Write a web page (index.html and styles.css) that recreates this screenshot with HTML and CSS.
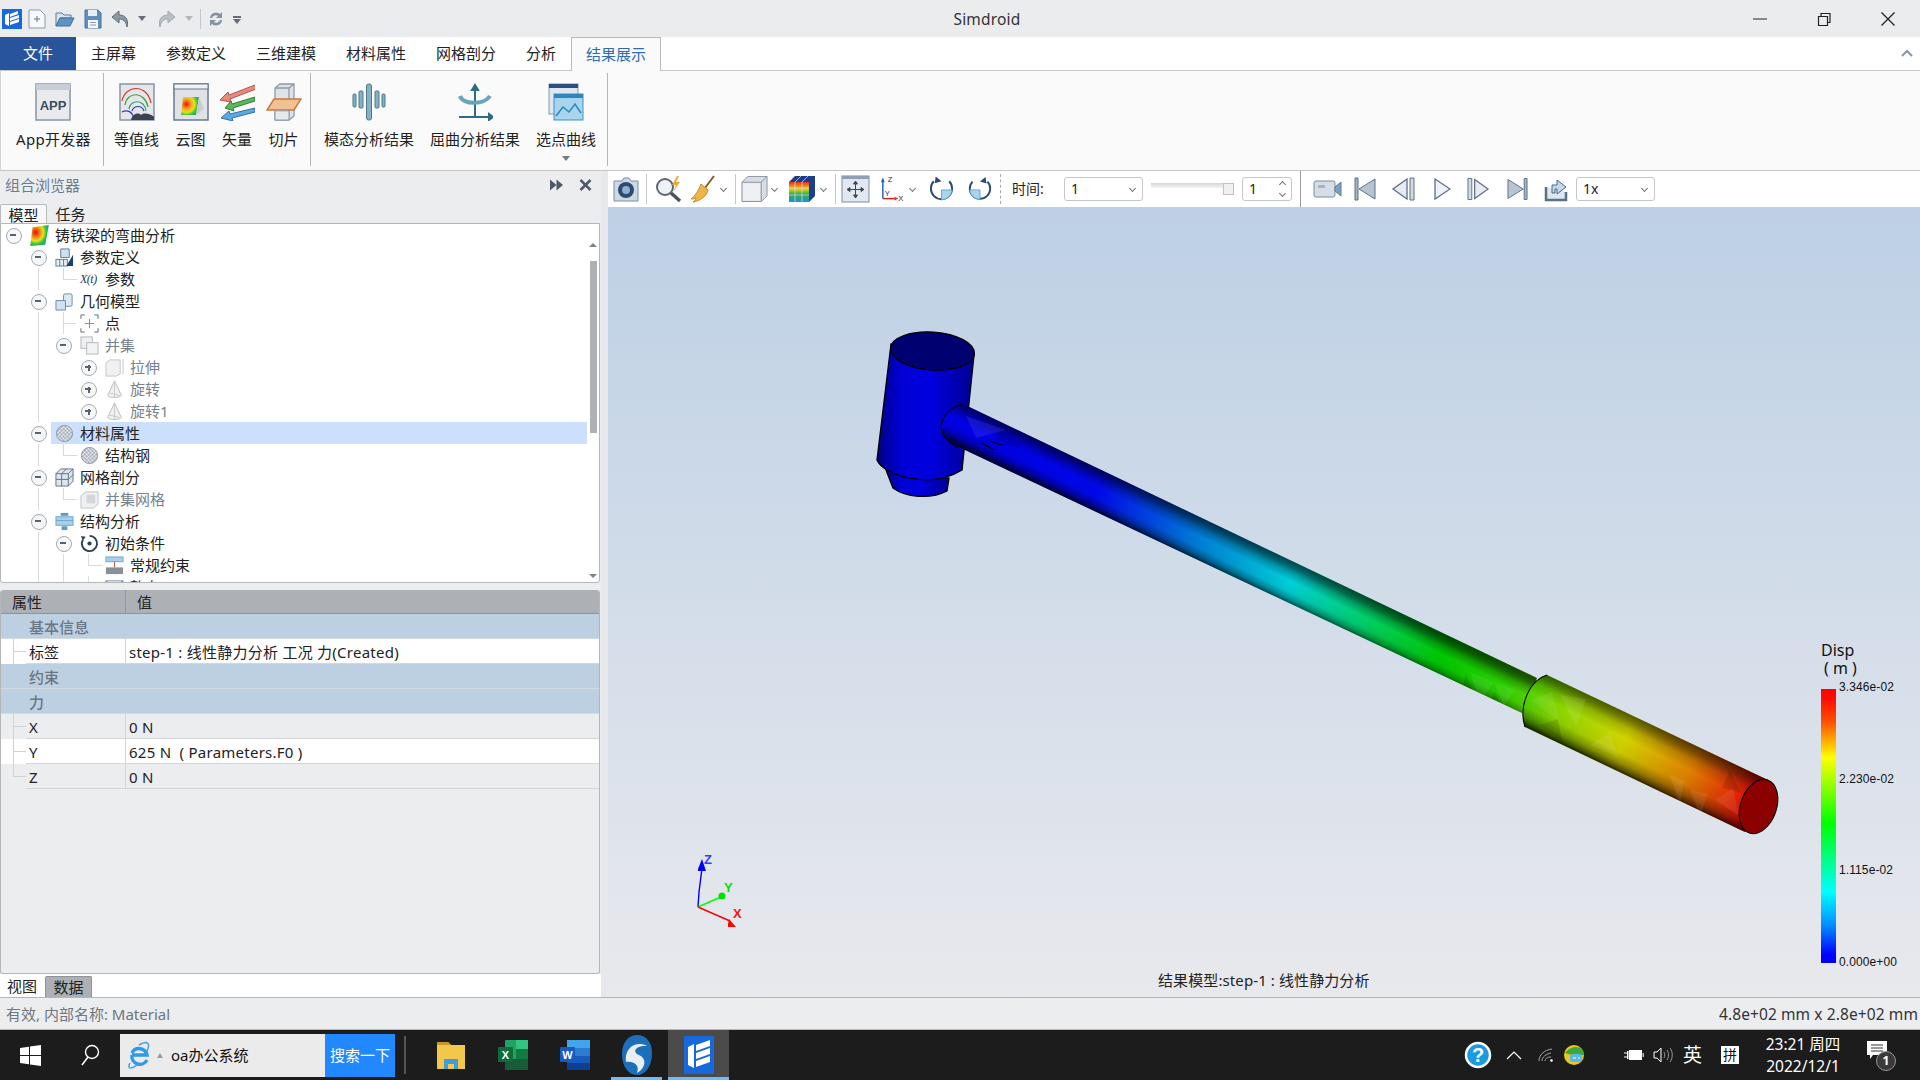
FILE: index.html
```html
<!DOCTYPE html>
<html lang="zh-CN">
<head>
<meta charset="utf-8">
<title>Simdroid</title>
<link rel="stylesheet" href="styles.css">
</head>
<body>
<svg class="defs" aria-hidden="true">
  <defs>
    <symbol id="logo" viewBox="0 0 20 20"><rect width="20" height="20" fill="#1668dc"/><path fill="#fff" d="M3 6l4-2v13l-4-2zM8 5l8-3v3l-8 3zM8 9l9-3v3l-9 3zM8 13l9-3v3l-9 3z"/></symbol>
    <pattern id="chk" width="4" height="4" patternUnits="userSpaceOnUse"><rect width="4" height="4" fill="#f2f3f6"/><circle cx="1" cy="1" r="1.300" fill="#a4acb8"/><circle cx="3" cy="3" r="1.300" fill="#a4acb8"/></pattern>
    <symbol id="ball" viewBox="0 0 20 20"><circle cx="10" cy="10" r="8.500" fill="url(#chk)" stroke="#8b98a8"/></symbol>
    <symbol id="cone" viewBox="0 0 20 22"><path d="M10 1L2 18c2 3 14 3 16 0z" fill="#f0f0f0" stroke="#b5b8bc"/><path d="M10 1v19M4 15l12 3" stroke="#c4c6c9" fill="none"/></symbol>
  </defs>
</svg>

<div class="app">
  <header class="titlebar">
    <div class="qat">
      <svg class="q q20 first" viewBox="0 0 20 20"><use href="#logo"/></svg>
      <svg class="q q18" viewBox="0 0 18 20"><path d="M1 1h11l5 5v13H1z" fill="#f7f8fa" stroke="#8c9bb0"/><path d="M6 10h6M9 7v6" stroke="#66758a"/></svg>
      <svg class="q q20" viewBox="0 0 20 18"><path d="M1 3h6l2 2h7v3H5L1 16z" fill="#d8e4ef" stroke="#5d7c9a"/><path d="M5 8h14l-4 8H1z" fill="#5f93c4" stroke="#3f6f9f"/></svg>
      <svg class="q q18" viewBox="0 0 18 20"><path d="M1 1h13l3 3v15H1z" fill="#5e8fc0" stroke="#48709a"/><rect x="4" y="1" width="9" height="6" fill="#e8eef4"/><rect x="4" y="11" width="10" height="8" fill="#f4f6f8"/><path d="M6 13.500h6M6 16h6" stroke="#8a9bb0"/></svg>
      <svg class="q q18" viewBox="0 0 18 18"><path d="M8 1L1 7l7 6V9c4 0 7 2 8 8 2-8-2-12-8-12z" fill="#8d97a5" stroke="#5f6b7a"/></svg>
      <i class="caret gap"></i>
      <svg class="q q18 dim" viewBox="0 0 18 18"><path d="M10 1l7 6-7 6V9c-4 0-7 2-8 8C0 9 4 5 10 5z" fill="#b9bfc7" stroke="#a3a9b1"/></svg>
      <i class="caret light"></i>
      <i class="qsep"></i>
      <svg class="q q16" viewBox="0 0 16 18"><path d="M2 8a6 6 0 0 1 10-4l2-2v6H8l2-2a4 4 0 0 0-6 2zM14 10a6 6 0 0 1-10 4l-2 2v-6h6l-2 2a4 4 0 0 0 6-2z" fill="#88929e"/></svg>
      <i class="caret bar"></i>
    </div>
    <div class="apptitle">Simdroid</div>
    <div class="winctl">
      <svg class="wc" viewBox="0 0 16 16"><path d="M1 8h14" stroke="#222"/></svg>
      <svg class="wc" viewBox="0 0 16 16"><path d="M2.500 5.500h9v9h-9zM5 5V2.500h9v9h-2" fill="none" stroke="#222" stroke-width="1.200"/></svg>
      <svg class="wc" viewBox="0 0 16 16"><path d="M1.500 1.500l13 13M14.500 1.500l-13 13" stroke="#222" stroke-width="1.300"/></svg>
    </div>
  </header>

  <nav class="tabs">
    <div class="tab file">文件</div>
    <div class="tab">主屏幕</div>
    <div class="tab">参数定义</div>
    <div class="tab">三维建模</div>
    <div class="tab">材料属性</div>
    <div class="tab">网格剖分</div>
    <div class="tab">分析</div>
    <div class="tab active">结果展示</div>
    <svg class="collapse" viewBox="0 0 12 10"><path d="M1 7l5-5 5 5" fill="none" stroke="#8a96a4" stroke-width="2"/></svg>
  </nav>

  <section class="ribbon">
    <div class="rgroup g1">
      <div class="ritem">
        <svg class="ric" viewBox="0 0 36 38"><rect x="1" y="1" width="34" height="36" fill="#e8eaee" stroke="#8795a8" stroke-width="1.500"/><rect x="1" y="1" width="34" height="6" fill="#c7ced8"/><text x="18" y="27" class="apptxt">APP</text></svg>
        <span>App开发器</span>
      </div>
    </div>
    <div class="rgroup g2">
      <div class="ritem">
        <svg class="ric" viewBox="0 0 36 38"><rect x="1" y="1" width="34" height="36" fill="#e4e6ea" stroke="#8a94a2" stroke-width="1.500"/><g fill="none" stroke-width="1.200"><path d="M3 18C6 2 28 0 32 20" stroke="#d8372c"/><path d="M6 22C8 8 26 8 29 24" stroke="#3d9a3c"/><path d="M10 26c1-10 16-10 17 2" stroke="#3aa07a"/><path d="M3 29c6-3 10 0 12 6" stroke="#3b3bb0"/><path d="M13 28c2-6 10-6 12 0" stroke="#3b3bb0"/></g><path d="M12 37c1-6 7-8 10-5 3-3 10-1 13 2v3z" fill="#3b4252"/></svg>
        <span>等值线</span>
      </div>
      <div class="ritem">
        <svg class="ric" viewBox="0 0 36 38"><defs><radialGradient id="cloud" cx=".3" cy=".4" r=".9"><stop offset="0" stop-color="#e8141c"/><stop offset=".3" stop-color="#f4a41c"/><stop offset=".5" stop-color="#e8e020"/><stop offset=".7" stop-color="#30c040"/><stop offset="1" stop-color="#1a80e0"/></radialGradient></defs><rect x="1" y="1" width="34" height="36" fill="#dfe2e7" stroke="#6a7a90" stroke-width="1.500"/><rect x="1" y="1" width="34" height="5" fill="#f0f2f5" stroke="#6a7a90"/><path d="M10 14h16l-3 18H8z" fill="url(#cloud)"/><path d="M26 14l5 12-8 6z" fill="#c8ccd2"/></svg>
        <span>云图</span>
      </div>
      <div class="ritem">
        <svg class="ric" viewBox="0 0 36 38"><path d="M36 2L10 12l-1-3-8 8 11 2-1-3 26-10z" fill="#e8897a" stroke="#a85a50"/><path d="M36 14L13 21l-1-3-6 7 9 3-1-3 22-7z" fill="#5cb85c" stroke="#3a7a3a"/><path d="M36 25L11 31l-1-3-8 7 12 3-1-3 23-6z" fill="#5aa8e8" stroke="#38709c"/></svg>
        <span>矢量</span>
      </div>
      <div class="ritem">
        <svg class="ric" viewBox="0 0 36 38"><path d="M9 5l5-4h14v32l-5 4H9z" fill="#dfe2e7" stroke="#8f9aa8" stroke-width="1.300"/><path d="M9 5h14v32M23 5l5-4" fill="none" stroke="#8f9aa8" stroke-width="1.300"/><path d="M8 16h27l-7 11H1z" fill="#f2c190" stroke="#c87b3c" stroke-width="1.500"/><path d="M9 27.800h14v9.200H9z" fill="#e6e9ed" stroke="#8f9aa8"/></svg>
        <span>切片</span>
      </div>
    </div>
    <div class="rgroup g3">
      <div class="ritem">
        <svg class="ric" viewBox="0 0 36 38"><g fill="#86b0c6" stroke="#4d7a8c"><rect x="15.500" y="1" width="5" height="36" rx="2"/><rect x="8" y="8" width="4" height="17" rx="1"/><rect x="24" y="8" width="4" height="17" rx="1"/><rect x="2" y="11" width="3" height="13" rx="1"/><rect x="31" y="11" width="3" height="13" rx="1"/></g></svg>
        <span>模态分析结果</span>
      </div>
      <div class="ritem">
        <svg class="ric" viewBox="0 0 36 38"><path d="M18 2l-3 5h6zM18 6v28M2 34h30M32 31l4 3-4 3z" stroke="#2f6b84" fill="#2f6b84" stroke-width="2"/><path d="M3 13c3 9 24 9 30 0" fill="none" stroke="#6ba2bc" stroke-width="4"/></svg>
        <span>屈曲分析结果</span>
      </div>
      <div class="ritem">
        <svg class="ric" viewBox="0 0 36 38"><rect x="1" y="1" width="29" height="30" fill="#dce7f2" stroke="#8098b0"/><rect x="1" y="1" width="29" height="4" fill="#2c4f80"/><rect x="6" y="11" width="29" height="26" fill="#a8d4ee" stroke="#3f8fc4"/><rect x="6" y="11" width="29" height="4" fill="#2e86c0"/><path d="M8 33l7-9 6 5 6-8 6 9" fill="none" stroke="#2e86c0" stroke-width="1.500"/></svg>
        <span>选点曲线</span>
        <i class="caret rcaret"></i>
      </div>
    </div>
  </section>

  <main class="main">
    <aside class="left">
      <div class="lhead">
        <span>组合浏览器</span>
        <div class="lhead-ic">
          <svg viewBox="0 0 14 12"><path d="M0 0l7 6-7 6zM7 0l7 6-7 6z" fill="#4d5a69"/></svg>
          <svg viewBox="0 0 12 12"><path d="M1 1l10 10M11 1L1 11" stroke="#4d5a69" stroke-width="2.500"/></svg>
        </div>
      </div>
      <div class="ltabs"><div class="ltab on">模型</div><div class="ltab">任务</div></div>

      <div class="tree">
        <div class="rows">
          <div class="row"><i class="c m"></i><div class="node"><svg class="ti root" viewBox="2 1 16 18"><defs><radialGradient id="tc" cx=".3" cy=".35" r=".85"><stop offset="0" stop-color="#e80c10"/><stop offset=".3" stop-color="#f09018"/><stop offset=".48" stop-color="#e8e020"/><stop offset=".68" stop-color="#28c040"/><stop offset="1" stop-color="#1a90e8"/></radialGradient></defs><path d="M4 3l14-2-3 17-13 1z" fill="url(#tc)"/></svg><span>铸铁梁的弯曲分析</span></div></div>
          <div class="row"><i class="c"></i><i class="c m"></i><div class="node"><svg class="ti" viewBox="0 0 20 20"><path d="M6 1h9v9H6z" fill="#cfe0f0" stroke="#5d7c9a"/><rect x="1" y="12" width="12" height="7" fill="#e8eef4" stroke="#5d7c9a"/><path d="M5 12v7M9 12v7" stroke="#5d7c9a"/><path d="M19 7v12H12z" fill="#1f3f6a"/></svg><span>参数定义</span></div></div>
          <div class="row"><i class="c"></i><i class="c v"></i><i class="c l"></i><div class="node"><span class="ti xt">X(t)</span><span>参数</span></div></div>
          <div class="row"><i class="c"></i><i class="c m"></i><div class="node"><svg class="ti" viewBox="0 0 20 20"><rect x="9" y="2" width="9" height="13" rx="1.500" fill="#dce8f4" stroke="#6f8ba6"/><path d="M1 9h10v10H1z" fill="#cfe2f4" stroke="#6f8ba6"/></svg><span>几何模型</span></div></div>
          <div class="row"><i class="c"></i><i class="c v"></i><i class="c t"></i><div class="node"><svg class="ti" viewBox="0 0 20 20"><path d="M1 5V1h4M15 1h4v4M19 15v4h-4M5 19H1v-4" fill="none" stroke="#5a6a7a"/><path d="M10 5v10M5 10h10" stroke="#b87a5a"/></svg><span>点</span></div></div>
          <div class="row off"><i class="c"></i><i class="c v"></i><i class="c m"></i><div class="node"><svg class="ti" viewBox="0 0 20 20"><rect x="1" y="1" width="12" height="12" fill="#eef0f2" stroke="#b4b8bd"/><rect x="7" y="7" width="12" height="12" fill="#f2f3f5" stroke="#b4b8bd"/></svg><span>并集</span></div></div>
          <div class="row off"><i class="c"></i><i class="c v"></i><i class="c"></i><i class="c p"></i><div class="node"><svg class="ti" viewBox="0 0 20 20"><path d="M1 5l4-3h11v15l-4 2H1z" fill="#eef0f2" stroke="#c2c5c9"/><path d="M19 1v16" stroke="#c2c5c9"/></svg><span>拉伸</span></div></div>
          <div class="row off"><i class="c"></i><i class="c v"></i><i class="c"></i><i class="c p"></i><div class="node"><svg class="ti" viewBox="0 0 20 22"><use href="#cone"/></svg><span>旋转</span></div></div>
          <div class="row off"><i class="c"></i><i class="c v"></i><i class="c"></i><i class="c p"></i><div class="node"><svg class="ti" viewBox="0 0 20 22"><use href="#cone"/></svg><span>旋转1</span></div></div>
          <div class="row"><i class="c"></i><i class="c m"></i><div class="node sel"><svg class="ti" viewBox="0 0 20 20"><use href="#ball"/></svg><span>材料属性</span></div></div>
          <div class="row"><i class="c"></i><i class="c v"></i><i class="c l"></i><div class="node"><svg class="ti" viewBox="0 0 20 20"><use href="#ball"/></svg><span>结构钢</span></div></div>
          <div class="row"><i class="c"></i><i class="c m"></i><div class="node"><svg class="ti" viewBox="0 0 20 20"><path d="M1 6l5-5h13v13l-5 5H1z" fill="#dfe6ee" stroke="#5f7288"/><path d="M1 6h13v13M14 6l5-5M7 6v13M1 12h13M7 6l5-5M14 12l5-5" fill="none" stroke="#5f7288"/></svg><span>网格剖分</span></div></div>
          <div class="row off"><i class="c"></i><i class="c v"></i><i class="c l"></i><div class="node"><svg class="ti" viewBox="0 0 20 20"><path d="M1 6l5-4h13v13l-5 4H1z" fill="#eef0f2" stroke="#c0c3c7"/><rect x="7" y="5" width="9" height="9" fill="#d2d5d9"/></svg><span>并集网格</span></div></div>
          <div class="row"><i class="c"></i><i class="c m"></i><div class="node"><svg class="ti" viewBox="0 0 20 20"><rect x="6" y="1" width="8" height="3" fill="#5c9cc8"/><rect x="1" y="5" width="18" height="9" fill="#a8d0e8" stroke="#6ca6cc"/><path d="M1 9h18" stroke="#6ca6cc"/><rect x="7" y="15" width="6" height="4" fill="#5c9cc8"/></svg><span>结构分析</span></div></div>
          <div class="row"><i class="c"></i><i class="c v"></i><i class="c m"></i><div class="node"><svg class="ti" viewBox="0 0 20 20"><path d="M10 2a8 8 0 1 1-7 4" fill="none" stroke="#2c3f56" stroke-width="2"/><path d="M1 2l5 1-3 4z" fill="#2c3f56"/><circle cx="10" cy="10" r="2.200" fill="#2c3f56"/></svg><span>初始条件</span></div></div>
          <div class="row"><i class="c"></i><i class="c v"></i><i class="c v"></i><i class="c l"></i><div class="node"><svg class="ti" viewBox="0 0 20 20"><rect x="1" y="1" width="18" height="5" fill="#a8d0e8" stroke="#6ca6cc"/><path d="M10 6v6" stroke="#c0503a"/><rect x="1" y="12" width="18" height="7" fill="#8a9098"/></svg><span>常规约束</span></div></div>
          <div class="row"><i class="c"></i><i class="c v"></i><i class="c v"></i><i class="c l"></i><div class="node"><svg class="ti" viewBox="0 0 20 20"><path d="M1 3h18v14H1zM1 3l9 7 9-7" fill="none" stroke="#6f8ba6"/></svg><span>静力</span></div></div>
        </div>
        <div class="scroll">
          <i class="arr up"></i>
          <div class="track"><div class="thumb"></div></div>
          <i class="arr down"></i>
        </div>
      </div>

      <div class="props">
        <div class="phead"><div class="pk">属性</div><div class="pv">值</div></div>
        <div class="pgroup">基本信息</div>
        <div class="prow white"><i class="pt"></i><div class="pk">标签</div><div class="pv wide">step-1 : 线性静力分析 工况 力(Created)</div></div>
        <div class="pgroup">约束</div>
        <div class="pgroup">力</div>
        <div class="prow"><i class="pt"></i><div class="pk">X</div><div class="pv wide">0 N</div></div>
        <div class="prow white"><i class="pt"></i><div class="pk">Y</div><div class="pv wide">625 N &nbsp;( Parameters.F0 )</div></div>
        <div class="prow"><i class="pt end"></i><div class="pk">Z</div><div class="pv wide">0 N</div></div>
      </div>

      <div class="btabs"><div class="btab">视图</div><div class="btab on">数据</div></div>
    </aside>

    <section class="right">
      <div class="toolbar">
        <svg class="t-cam" viewBox="0 0 28 28"><path d="M2 6h8l2-3h5l2 3h7v20H2z" fill="#cfd9e6" stroke="#7c8ca0"/><circle cx="14" cy="15" r="8" fill="#2f4a70"/><circle cx="14" cy="15" r="4" fill="#8fb0d0"/></svg>
        <i class="tsep"></i>
        <svg class="t-mag" viewBox="0 0 32 28"><circle cx="12" cy="12" r="8" fill="#eef2f6" stroke="#5a6676" stroke-width="2"/><path d="M18 18l9 8" stroke="#4a5260" stroke-width="3.500"/><path d="M24 1l-5 9h4l-3 7 7-10h-4l3-6z" fill="#f0a63a"/></svg>
        <svg class="t-broom" viewBox="0 0 26 28"><path d="M24 1L15 13" stroke="#8a5a2c" stroke-width="2"/><path d="M11 9l7 6c-1 6-8 11-15 12 3-2 3-4 3-4-2 1-4 1-5 1 4-3 8-9 10-15z" fill="#f0b44c" stroke="#c88a28"/></svg>
        <i class="chev c4"></i>
        <i class="tsep s8"></i>
        <svg class="t-cube" viewBox="0 0 28 28"><path d="M1 7l6-6h20v20l-6 6H1z" fill="#d8dde4" stroke="#8793a2"/><path d="M2 8h18v18H2z" fill="#eef0f3"/><path d="M1 7h20v20M21 7l6-6" fill="none" stroke="#8793a2"/></svg>
        <i class="chev c3"></i>
        <svg class="t-cc" viewBox="0 0 28 28"><defs><linearGradient id="cc" x1="0" y1="0" x2="0" y2="1"><stop offset="0" stop-color="#e83020"/><stop offset=".35" stop-color="#e8d020"/><stop offset=".6" stop-color="#30b040"/><stop offset="1" stop-color="#2090e0"/></linearGradient></defs><path d="M1 7l6-6h20v20l-6 6H1z" fill="#1c3f8a"/><rect x="1" y="7" width="20" height="20" fill="url(#cc)"/><path d="M7 7v20M14 7v20M1 13h20M1 20h20M7 7l6-6M14 7l6-6" stroke="#dde" stroke-width=".7"/></svg>
        <i class="chev c4"></i>
        <i class="tsep s8"></i>
        <svg class="t-fit" viewBox="0 0 29 28"><rect x="1" y="1" width="27" height="26" fill="#e2e8f0" stroke="#7c8ca0"/><rect x="1" y="1" width="27" height="3" fill="#8fa0b4"/><path d="M14.500 8v13M8 14.500h13M14.500 6l-2 3h4zM14.500 23l-2-3h4zM6 14.500l3-2v4zM23 14.500l-3-2v4z" fill="#3e4a58" stroke="#3e4a58"/></svg>
        <svg class="t-axes" viewBox="0 0 26 28"><path d="M4 6v18" stroke="#1f5fc0" stroke-width="1.500"/><path d="M4 2l-2 5h4z" fill="#1f5fc0"/><path d="M4 24h12" stroke="#e02020" stroke-width="1.500"/><path d="M20 24l-4-2v4z" fill="#e02020"/><text x="9" y="7" class="axt">Z</text><text x="6" y="21" class="axt">Y</text><text x="20" y="27" class="axt">X</text></svg>
        <i class="chev c5"></i>
        <svg class="t-rot1" viewBox="0 0 28 28"><path d="M6 6a11 11 0 1 0 16 0" fill="none" stroke="#2a4a70" stroke-width="2"/><path d="M7 8l1-7 6 5z" fill="#2a4a70"/><path d="M25 15H14v10c6 0 10-4 11-10z" fill="#a8d4ee" stroke="#5fa8d8"/></svg>
        <svg class="t-rot2" viewBox="0 0 28 28"><path d="M22 6a11 11 0 1 1-16 0" fill="none" stroke="#2a4a70" stroke-width="2"/><path d="M21 8L20 1l-6 5z" fill="#2a4a70"/><path d="M3 15h11v10C8 25 4 21 3 15z" fill="#a8d4ee" stroke="#5fa8d8"/></svg>
        <i class="dots"></i>
        <span class="tlabel">时间:</span>
        <div class="sel-box w79"><span>1</span><i class="chev inbox"></i></div>
        <div class="slider"><i class="knob"></i></div>
        <div class="sel-box w50"><span>1</span><div class="spin"><i class="chev flip"></i><i class="chev"></i></div></div>
        <i class="tsep tall"></i>
        <svg class="t-vid" viewBox="0 0 29 20"><rect x="1" y="2" width="21" height="16" rx="2" fill="#d6dde6" stroke="#7c8ca0"/><rect x="5" y="6" width="7" height="3" fill="#aab4c0"/><path d="M22 8l6-5v14l-6-5z" fill="#7ca0c4" stroke="#5a7a9c"/></svg>
        <svg class="t-first" viewBox="0 0 22 24"><path d="M1 1h3v22H1z" fill="#a8b4c4" stroke="#5f6f86"/><path d="M21 2L5 12l16 10z" fill="#b8c4d2" stroke="#5f6f86"/></svg>
        <svg class="t-prev" viewBox="0 0 24 24"><path d="M16 2L2 12l14 10z" fill="#e8ecf2" stroke="#5f6f86" stroke-width="1.300"/><path d="M19 1h4v22h-4z" fill="#d2dae4" stroke="#5f6f86"/></svg>
        <svg class="t-play" viewBox="0 0 17 24"><path d="M1 2l15 10L1 22z" fill="#eef1f5" stroke="#5f6f86" stroke-width="1.300"/></svg>
        <svg class="t-next" viewBox="0 0 24 24"><path d="M8 2l14 10L8 22z" fill="#e8ecf2" stroke="#5f6f86" stroke-width="1.300"/><path d="M1 1h4v22H1z" fill="#d2dae4" stroke="#5f6f86"/></svg>
        <svg class="t-last" viewBox="0 0 22 24"><path d="M18 1h3v22h-3z" fill="#a8b4c4" stroke="#5f6f86"/><path d="M1 2l16 10L1 22z" fill="#b8c4d2" stroke="#5f6f86"/></svg>
        <svg class="t-exp" viewBox="0 0 24 26"><path d="M2 11v13h20v-8" fill="#dfe6ee" stroke="#5a7088" stroke-width="2.500"/><path d="M8 17V9h5V4l9 7-9 7v-5h-2v4z" fill="#c4d8ec" stroke="#4a6884"/></svg>
        <div class="sel-box w79 last"><span>1x</span><i class="chev inbox"></i></div>
      </div>

      <div class="view">
        <svg class="model" viewBox="608 207 1312 790">
          <defs>
            <linearGradient id="along" gradientUnits="userSpaceOnUse" x1="950" y1="420" x2="1770" y2="815">
              <stop offset=".06" stop-color="#0000e6"/><stop offset=".18" stop-color="#0008ea"/><stop offset=".305" stop-color="#0080d8"/><stop offset=".415" stop-color="#00d0d8"/><stop offset=".5" stop-color="#00d070"/><stop offset=".6" stop-color="#00c800"/><stop offset=".68" stop-color="#30d000"/><stop offset=".745" stop-color="#90d800"/><stop offset=".82" stop-color="#d4d400"/><stop offset=".9" stop-color="#e08000"/><stop offset=".976" stop-color="#e00808"/>
            </linearGradient>
            <linearGradient id="shA" gradientUnits="userSpaceOnUse" x1="1200" y1="518" x2="1183" y2="553">
              <stop offset="0" stop-opacity=".62"/><stop offset=".12" stop-opacity=".48"/><stop offset=".24" stop-opacity=".24"/><stop offset=".44" stop-opacity="0"/><stop offset=".7" stop-opacity=".05"/><stop offset=".86" stop-opacity=".3"/><stop offset=".96" stop-opacity=".6"/><stop offset="1" stop-opacity=".75"/>
            </linearGradient>
            <linearGradient id="shB" gradientUnits="userSpaceOnUse" x1="1650" y1="723" x2="1625" y2="774">
              <stop offset="0" stop-opacity=".62"/><stop offset=".12" stop-opacity=".45"/><stop offset=".26" stop-opacity=".16"/><stop offset=".44" stop-opacity="0"/><stop offset=".7" stop-opacity=".06"/><stop offset=".86" stop-opacity=".32"/><stop offset=".96" stop-opacity=".62"/><stop offset="1" stop-opacity=".78"/>
            </linearGradient>
            <linearGradient id="head" x1="0" y1="0" x2="1" y2="0">
              <stop offset="0" stop-color="#000078"/><stop offset=".1" stop-color="#0000a8"/><stop offset=".25" stop-color="#0000d4"/><stop offset=".55" stop-color="#0000e0"/><stop offset=".8" stop-color="#0000b4"/><stop offset="1" stop-color="#000090"/>
            </linearGradient>
            <clipPath id="clipA"><path d="M963 404L1537 678 1522 713 963 449C950 444 942 436 941 428 941 418 950 406 963 404Z"/></clipPath>
            <clipPath id="clipB"><path d="M1547 675L1768 780 1745 832 1525 727C1518 705 1530 680 1547 675Z"/></clipPath>
          </defs>
          <path class="edge" fill="url(#head)" d="M886 470L893 488C905 497 930 500 947 491L949 478Z"/>
          <path class="edge" fill="url(#head)" d="M891 344L877 460C883 475 930 490 962 470L974 355Z"/>
          <ellipse class="edge" cx="932.500" cy="351" rx="42" ry="19" fill="#000070" transform="rotate(4 932.500 351)"/>

          <path fill="url(#along)" d="M963 404L1537 678 1522 713 963 449C950 444 942 436 941 428 941 418 950 406 963 404Z"/>
          <path fill="url(#shA)" d="M963 404L1537 678 1522 713 963 449C950 444 942 436 941 428 941 418 950 406 963 404Z"/>
          <g class="facets" clip-path="url(#clipA)">
            <path d="M1470 672l24 10-14 20z"/><path d="M1494 682l20 8-10 16z"/><path class="dk" d="M1466 674l10 24-14-8z"/><path class="dk" d="M1495 692l8 18-16-6z"/>
            <path d="M966 416l40 14-30 8z"/><path class="dk" d="M1000 430l22 18-28-4z"/>
          </g>
          <path class="edge thin" d="M963 404C950 406 941 418 941 428 942 436 950 444 958 447"/>
          <path class="edge thin" d="M990 441l12 4M982 443l12 7"/>

          <path fill="url(#along)" d="M1547 675L1768 780 1745 832 1525 727C1518 705 1530 680 1547 675Z"/>
          <path fill="url(#shB)" d="M1547 675L1768 780 1745 832 1525 727C1518 705 1530 680 1547 675Z"/>
          <g class="facets" clip-path="url(#clipB)">
            <path d="M1530 700l22-8 8 30z"/><path d="M1560 695l26 4-10 28z"/><path d="M1590 745l20-14 8 26z"/><path class="dk" d="M1540 725l18-6 4 22z"/>
            <path d="M1715 800l18-12 6 28z"/><path d="M1690 790l18 4-8 22z"/><path d="M1670 775l14 6-4 24z"/><path class="dk" d="M1705 815l12 3-4 12z"/><path class="dk" d="M1730 770l10 22-18-4z"/>
          </g>
          <path class="edge thin" d="M1547 675C1530 680 1518 705 1525 727"/>
          <ellipse class="edge thin" cx="1758.500" cy="806.500" rx="28" ry="18" fill="#8c0000" transform="rotate(109 1758.500 806.500)"/>

          <g class="triad">
            <path stroke="#0000ff" d="M698 907L699 892 702 868"/>
            <path fill="#0000ff" d="M702 859L698 869 698 871 706 871Z"/>
            <path stroke="#00ff00" d="M698 907L723 896"/>
            <circle cx="722" cy="896" r="3.500" fill="#00e000"/>
            <path stroke="#ff0000" d="M698 907L730 921"/>
            <path fill="#ff0000" d="M729 919L736 927 728 927 728 924Z"/>
            <text x="704" y="864" class="tz">Z</text>
            <text x="724" y="892" class="ty">Y</text>
            <text x="733" y="918" class="tx">X</text>
          </g>
        </svg>
        <div class="legend">
          <div class="lg-title">Disp<br><span>( m )</span></div>
          <div class="lg-body">
            <div class="lg-bar"></div>
            <div class="lg-labels"><span>3.346e-02</span><span>2.230e-02</span><span>1.115e-02</span><span>0.000e+00</span></div>
          </div>
        </div>
        <div class="caption">结果模型:step-1 : 线性静力分析</div>
      </div>
    </section>
  </main>

  <footer class="status"><span>有效, 内部名称: Material</span><span class="dim-size">4.8e+02 mm x 2.8e+02 mm</span></footer>

  <div class="taskbar">
    <svg class="start" viewBox="0 0 21 21"><path d="M0 3l9-1.300v8.300H0zM10 1.500L21 0v10H10zM0 11h9v8.300L0 18zM10 11h11v10l-11-1.500z" fill="#fff"/></svg>
    <svg class="tsearch" viewBox="0 0 20 22"><circle cx="12" cy="8" r="6.500" fill="none" stroke="#fff" stroke-width="1.400"/><path d="M8 13l-6 8" stroke="#fff" stroke-width="1.600"/></svg>
    <div class="sbox">
      <svg class="ie" viewBox="0 0 24 32"><path d="M5 14a8 8 0 0 1 15 2H5m0 0a8 8 0 0 0 15 5" fill="none" stroke="#2f9ae8" stroke-width="3.500"/><path d="M3 24C-1 31 6 30 12 24M12 6c8-5 12-2 8 6" fill="none" stroke="#3aa0ea" stroke-width="1.500"/></svg>
      <i class="iecaret"></i>
      <span class="stext">oa办公系统</span>
      <div class="sbtn">搜索一下</div>
    </div>
    <i class="tbsep"></i>
    <div class="tapp"><svg viewBox="0 0 30 32"><path d="M1 3h11l3 3h14v24H1z" fill="#f2c84c"/><path d="M1 3h11l3 3H1z" fill="#c8962a"/><path d="M8 30V20h14v10h-4v-5h-6v5z" fill="#3f9ed8"/></svg></div>
    <div class="tapp"><svg viewBox="0 0 30 32"><rect x="7" y="1" width="23" height="30" rx="1" fill="#21a366"/><rect x="18" y="1" width="12" height="9" fill="#33c481"/><rect x="7" y="20" width="23" height="11" fill="#185c37"/><rect x="18" y="10" width="12" height="10" fill="#107c41"/><rect y="8" width="15" height="15" rx="1" fill="#0f6b3a"/><text x="7.500" y="20" class="tile">X</text></svg></div>
    <div class="tapp"><svg viewBox="0 0 30 32"><rect x="7" y="1" width="23" height="30" rx="1" fill="#2b7cd3"/><rect x="7" y="1" width="23" height="8" fill="#41a5ee"/><rect x="7" y="17" width="23" height="7" fill="#185abd"/><rect x="7" y="24" width="23" height="7" fill="#103f91"/><rect y="8" width="15" height="15" rx="1" fill="#185abd"/><text x="7.500" y="20" class="tile">W</text></svg></div>
    <div class="tapp under"><svg viewBox="0 0 30 42"><path d="M15 1c9 0 15 7 15 18 0 14-7 22-15 22C6 41 0 32 0 20 0 9 6 1 15 1z" fill="#1c6fb8"/><path d="M4 28C2 14 14 6 25 12 15 11 9 17 17 21c8 3 7 13-2 18 3-8-3-12-11-11z" fill="#e8eef2"/></svg></div>
    <div class="tapp cur"><svg viewBox="0 0 30 38"><rect width="30" height="38" fill="#1668dc"/><path fill="#fff" d="M4 11l6-3v24l-6-3zM12 9L26 4v6L12 15zM12 17l14-5v6l-14 5zM12 25l14-5v6l-14 5z"/></svg></div>
    <div class="tray">
      <svg class="help" viewBox="0 0 28 28"><circle cx="14" cy="14" r="12" fill="#1a9ae0" stroke="#fff" stroke-width="2.500"/><text x="14" y="21" class="qm">?</text></svg>
      <svg class="chevup" viewBox="0 0 16 9"><path d="M1 8l7-7 7 7" fill="none" stroke="#fff" stroke-width="1.200"/></svg>
      <svg class="wifi" viewBox="0 0 16 14"><path d="M1 13C1 7 6 2 14 1M4 13c0-4 4-7 9-8M7 13c0-2 2-4 6-4" fill="none" stroke="#a8a8a8"/><circle cx="13.500" cy="12.500" r="1.300" fill="#fff"/></svg>
      <svg class="game" viewBox="0 0 20 20"><circle cx="10" cy="10" r="10" fill="#e8c820"/><path d="M1 8c4-6 12-8 17-4 2 3 2 5 2 6H8z" fill="#3fa83a"/><rect x="6" y="9" width="12" height="8" rx="3" fill="#58b8e8"/><path d="M9 13h3M15 12v2" stroke="#fff"/></svg>
      <svg class="batt" viewBox="0 0 20 12"><path d="M0 4h3M0 8h3" stroke="#fff"/><rect x="3" y="2" width="1.500" height="8" fill="#fff"/><rect x="5" y="1" width="13" height="10" fill="#fff"/><rect x="18.500" y="4" width="1.500" height="4" fill="#bbb"/></svg>
      <svg class="vol" viewBox="0 0 20 16"><path d="M1 5h3l4-4v14l-4-4H1z" fill="none" stroke="#fff"/><path d="M11 5c1 2 1 4 0 6M14 3c2 3 2 7 0 10M17 1c3 4 3 10 0 14" fill="none" stroke="#999"/></svg>
      <span class="ime">英</span>
      <span class="pin">拼</span>
      <div class="clock"><span>23:21 周四</span><span>2022/12/1</span></div>
      <div class="notif">
        <svg viewBox="0 0 20 18"><path d="M0 0h20v14H6l-3 4v-4H0z" fill="#fff"/><path d="M4 4h12M4 7h12M4 10h12" stroke="#333"/></svg>
        <span class="badge">1</span>
      </div>
    </div>
  </div>
</div>
</body>
</html>
```

FILE: styles.css
```css
* { box-sizing: border-box; }
html, body { margin: 0; padding: 0; }
body { font-family: "Noto Sans", "Noto Sans CJK SC", sans-serif; font-size: 15px; line-height: 20px; color: #222; background: #ecedef; }
i { display: block; font-style: normal; flex: none; }
svg { display: block; flex: none; }
.defs { position: absolute; width: 0; height: 0; }
.app { width: 1920px; height: 1080px; display: flex; flex-direction: column; overflow: hidden; }

/* title */
.titlebar { height: 37px; display: flex; align-items: center; background: #ebecee; flex: none; }
.qat { display: flex; align-items: center; width: 620px; padding-left: 2px; }
.q { margin-right: 9px; }
.q.first { margin-right: 6px; }
.q20 { width: 20px; height: 20px; }
.q18 { width: 18px; height: 20px; }
.q16 { width: 16px; height: 18px; }
.caret { width: 0; height: 0; border-left: 4px solid transparent; border-right: 4px solid transparent; border-top: 5px solid #666d78; }
.caret.gap { margin-right: 12px; }
.caret.light { border-top-color: #b4b8be; margin-right: 7px; }
.caret.bar { position: relative; top: 3px; }
.caret.bar::before { content: ""; position: absolute; left: -4px; top: -8px; width: 8px; height: 2px; background: #666d78; }
.qsep { width: 1px; height: 20px; background: #c4c7cb; margin-right: 7px; }
.apptitle { flex: 1; text-align: center; padding-right: 398px; font-size: 15.500px; color: #333; letter-spacing: .2px; }
.winctl { display: flex; align-items: center; gap: 48px; padding-right: 24px; }
.wc { width: 16px; height: 16px; }

/* tabs */
.tabs { height: 33px; display: flex; background: #fff; flex: none; position: relative; }
.tab { padding: 0 15px; line-height: 33px; color: #222; }
.tab.file { width: 76px; padding: 0; text-align: center; background: #27549b; color: #fff; }
.tab.active { background: #fafafa; color: #2c6cb4; border: 1px solid #b8babd; border-bottom: none; padding: 0 14px; margin-bottom: -1px; position: relative; z-index: 1; }
.collapse { width: 12px; height: 10px; margin: 12px 7px 0 auto; }

/* ribbon */
.ribbon { height: 101px; flex: none; background: #fafafa; border-top: 1px solid #c4c6c8; border-bottom: 1px solid #c4c6c8; border-left: 1px solid #d0d2d4; display: flex; }
.rgroup { display: flex; height: 93px; margin-top: 2px; border-right: 1px solid #b4b6b8; }
.g1 { width: 103px; padding-left: 15px; }
.g1 span { letter-spacing: .3px; }
.g2 { width: 207px; padding-left: 10px; gap: 16.500px; }
.g3 { width: 297px; padding-left: 13px; gap: 16px; }
.ritem { display: flex; flex-direction: column; align-items: center; position: relative; white-space: nowrap; }
.ric { width: 36px; height: 38px; margin-top: 10px; margin-bottom: 8px; }
.g2 .ric { margin-left: -4px; margin-right: -4px; }
.rcaret { border-top-color: #737a84; margin-top: 7px; }
.apptxt { font: bold 13px "Liberation Sans", sans-serif; text-anchor: middle; fill: #3c4c60; }

/* main */
.main { flex: 1; display: flex; min-height: 0; background: #e6e8ec; }
.left { width: 601px; flex: none; display: flex; flex-direction: column; background: #ecedef; }
.lhead { height: 33px; display: flex; align-items: center; justify-content: space-between; padding: 0 9px 6px 5px; color: #6d7c8d; flex: none; }
.lhead-ic { display: flex; gap: 16px; align-items: center; }
.lhead-ic svg { width: 13px; height: 12px; }
.ltabs { height: 19px; display: flex; flex: none; }
.ltab { width: 47px; text-align: center; line-height: 21px; height: 19px; }
.ltab.on { background: #f8f8f8; border: 1px solid #b8babd; border-bottom: none; border-radius: 2px 2px 0 0; line-height: 20px; }

/* tree */
.tree { height: 360px; flex: none; width: 600px; display: flex; background: #fff; border: 1px solid #b4b6b8; border-radius: 0 0 3px 3px; overflow: hidden; position: relative; }
.rows { width: 586px; flex: none; overflow: hidden; }
.row { height: 22px; display: flex; align-items: stretch; }
.c { width: 25px; position: relative; flex: none; }
.c.m::before, .c.p::before { content: ""; position: absolute; left: 5px; top: 4px; width: 14px; height: 14px; border: 1px solid #a4aab2; border-radius: 50%; background: #f6f7f8; }
.c.m::after, .c.p::after { content: ""; position: absolute; left: 9px; top: 10px; width: 6px; height: 2px; background: #59636f; }
.c.p::before { background: linear-gradient(#59636f, #59636f) no-repeat center / 2px 6px, #f6f7f8; }
.c.v::before { content: ""; position: absolute; left: 12px; top: 0; bottom: 0; width: 1px; background: #d8dadd; }
.c.l::before { content: ""; position: absolute; left: 12px; top: 0; height: 11px; width: 13px; border-left: 1px solid #d8dadd; border-bottom: 1px solid #d8dadd; }
.c.t::before { content: ""; position: absolute; left: 12px; top: 0; bottom: 0; width: 1px; background: #d8dadd; }
.c.t::after { content: ""; position: absolute; left: 12px; top: 11px; height: 1px; width: 13px; background: #d8dadd; }
.node { flex: 1; display: flex; align-items: center; gap: 6px; min-width: 0; padding-left: 4px; }
.node.sel { background: #cce0fb; }
.ti { width: 19px; height: 19px; flex: none; }
.ti.root { width: 21px; height: 21px; margin: 0 -1px; }
.xt { font: italic 12px "Liberation Serif", serif; color: #2a3a5a; letter-spacing: -.5px; display: block; line-height: 19px; }
.off { color: #76828e; }
.scroll { flex: 1; display: flex; flex-direction: column; align-items: center; padding: 19px 0 4px; }
.arr { width: 0; height: 0; border-left: 4px solid transparent; border-right: 4px solid transparent; }
.arr.up { border-bottom: 4px solid #79838f; }
.arr.down { border-top: 4px solid #79838f; }
.track { flex: 1; width: 7px; padding-top: 14px; }
.thumb { height: 172px; background: #adb1b5; }

/* properties */
.props { flex: 1; margin-top: 7px; background: #ecedef; border: 1px solid #b4b6b8; border-top: none; border-radius: 3px; width: 600px; overflow: hidden; min-height: 0; }
.phead { height: 24px; display: flex; background: #adb1b5; border-bottom: 1px solid #8f9397; line-height: 24px; color: #222; border-radius: 3px 3px 0 0; }
.phead .pk { width: 125px; padding-left: 11px; border-right: 1px solid #969a9e; }
.phead .pv { padding-left: 11px; }
.pgroup { height: 25px; line-height: 26px; padding-left: 28px; background: #bcd0e2; color: #6a7684; border-bottom: 1px solid #d2dae2; font-weight: 500; }
.prow { height: 25px; display: flex; line-height: 26px; background: #ecedef; }
.prow.white { background: #fff; }
.pt { width: 25px; position: relative; flex: none; }
.pt::before { content: ""; position: absolute; left: 12px; top: 0; bottom: 0; width: 1px; background: #d0d2d5; }
.pt::after { content: ""; position: absolute; left: 12px; top: 12px; width: 13px; height: 1px; background: #d0d2d5; }
.pt.end::before { bottom: 12px; }
.pk { width: 100px; flex: none; padding-left: 3px; border-right: 1px solid #d4d6d8; border-bottom: 1px solid #d4d6d8; }
.pv { flex: 1; padding-left: 3px; border-bottom: 1px solid #d4d6d8; }
.pv.wide { letter-spacing: .25px; }
.phead .pv, .phead .pk { border-bottom: none; }

.btabs { height: 23px; display: flex; background: #fff; padding: 2px 0 0 7px; flex: none; }
.btab { width: 30px; line-height: 20px; text-align: center; margin-right: 8px; }
.btab.on { width: 47px; background: #adb1b5; border: 1px solid #8f9397; border-bottom: none; border-radius: 2px 2px 0 0; height: 21px; }

/* toolbar */
.right { flex: 1; margin-left: 7px; display: flex; flex-direction: column; min-width: 0; }
.toolbar { height: 36px; flex: none; background: #fff; display: flex; align-items: center; padding-left: 4px; }
.toolbar svg { height: 28px; }
.t-cam { width: 28px; }
.t-mag { width: 32px; margin-left: 6px; }
.t-broom { width: 26px; margin-left: 5px; }
.t-cube { width: 27px; margin-left: 5px; }
.t-cc { width: 28px; margin-left: 10px; }
.t-fit { width: 29px; margin-left: 5px; }
.t-axes { width: 25px; margin-left: 9px; }
.t-rot1 { width: 27px; margin-left: 12px; }
.t-rot2 { width: 26px; margin-left: 12px; }
.toolbar .t-vid { width: 29px; height: 20px; margin-left: 12px; }
.toolbar .t-first { width: 22px; height: 24px; margin-left: 12px; }
.toolbar .t-prev { width: 24px; height: 24px; margin-left: 15px; }
.toolbar .t-play { width: 17px; height: 24px; margin-left: 19px; }
.toolbar .t-next { width: 23px; height: 24px; margin-left: 16px; }
.toolbar .t-last { width: 21px; height: 24px; margin-left: 17px; }
.toolbar .t-exp { width: 24px; height: 26px; margin-left: 16px; }
.chev { width: 7px; height: 7px; position: relative; }
.chev::before { content: ""; position: absolute; left: 1px; top: 0; width: 4px; height: 4px; border-right: 1px solid #6a7480; border-bottom: 1px solid #6a7480; transform: rotate(45deg); }
.chev.flip { transform: rotate(180deg); }
.c3 { margin-left: 3px; }
.c4 { margin-left: 4px; }
.c5 { margin-left: 5px; }
.tsep { width: 1px; height: 30px; background: #c4c6c8; margin-left: 6px; }
.tsep.s8 { margin-left: 8px; }
.tsep.tall { height: 36px; margin-left: 8px; background: #9a9ca0; }
.dots { width: 0; height: 30px; border-left: 1px dashed #aaa; margin-left: 7px; }
.tlabel { width: 52px; margin-left: 11px; flex: none; font-size: 14px; }
.sel-box { height: 24px; border: 1px solid #c4c6c8; border-radius: 3px; background: #fff; display: flex; align-items: center; justify-content: space-between; padding: 0 5px 0 6px; flex: none; font-size: 14px; }
.w79 { width: 79px; }
.w50 { width: 50px; }
.chev.inbox { margin: 0 1px 0 0; }
.slider { width: 83px; height: 24px; margin: 0 8px; position: relative; background: linear-gradient(#d4d6d8, #f4f4f4) no-repeat 0 6px / 72px 5px; flex: none; }
.knob { position: absolute; right: 0; top: 6px; width: 11px; height: 12px; background: #eef0f2; border: 1px solid #c0c2c4; }
.spin { display: flex; flex-direction: column; gap: 4px; }
.last { margin-left: 8px; }

/* viewport */
.view { flex: 1; position: relative; background: linear-gradient(#bdd0e5, #e8e9ed); min-height: 0; overflow: hidden; }
.model { position: absolute; inset: 0; width: 1312px; height: 790px; }
.edge { stroke: #000; stroke-width: 1.300; }
.edge.thin { stroke-width: 1.100; }
path.edge.thin { fill: none; }
.facets path { fill: #fff; fill-opacity: .08; }
.facets path.dk { fill: #000; fill-opacity: .12; }
.triad path[stroke] { fill: none; stroke-width: 1.400; }
.triad text { font: bold 13px "Liberation Sans", sans-serif; }
.tz { fill: #3a3aff; }
.ty { fill: #00e000; }
.tx { fill: #ff1010; }
.axt { font: 8px "Liberation Sans", sans-serif; fill: #333; }
.legend { position: absolute; left: 1213px; top: 434px; }
.lg-title { font-size: 16px; line-height: 18px; color: #111; height: 48px; }
.lg-title span { padding-left: 3px; }
.lg-body { display: flex; }
.lg-bar { width: 15px; height: 274px; background: linear-gradient(#ff0000 0%, #ff1000 4%, #ff5000 12%, #ffa000 18%, #ffff00 25%, #00ff00 49%, #00ffff 74%, #0090ff 86%, #0000ff 97%); }
.lg-labels { height: 291px; margin-top: -10px; margin-left: 3px; display: flex; flex-direction: column; justify-content: space-between; font: 12px/16px "Liberation Sans", sans-serif; color: #111; letter-spacing: .1px; }
.caption { position: absolute; left: 550px; top: 763px; color: #222; font-size: 15px; letter-spacing: .1px; }

/* status */
.status { height: 33px; flex: none; display: flex; justify-content: space-between; align-items: center; padding: 0 2px 0 6px; background: #ecedef; border-top: 1px solid #b4b6b8; border-bottom: 1px solid #b4b6b8; color: #6e7680; }
.dim-size { color: #333; font-size: 15.500px; letter-spacing: .1px; }

/* taskbar */
.taskbar { height: 50px; flex: none; background: #1c1c1c; display: flex; align-items: center; position: relative; }
.start { width: 21px; height: 21px; margin-left: 20px; }
.tsearch { width: 20px; height: 22px; margin-left: 39px; }
.sbox { width: 275px; height: 43px; margin-left: 20px; background: #ebebeb; display: flex; align-items: center; }
.ie { width: 24px; height: 32px; margin-left: 7px; }
.iecaret { width: 0; height: 0; border-left: 3px solid transparent; border-right: 3px solid transparent; border-bottom: 5px solid #9a9a9a; margin-left: 6px; }
.stext { flex: 1; margin-left: 8px; font-size: 15px; color: #111; }
.sbtn { width: 70px; height: 43px; line-height: 43px; text-align: center; background: #2288ff; color: #fff; font-size: 15px; }
.tbsep { width: 2px; height: 38px; background: #555; margin: 0 13px 0 9px; }
.tapp { width: 61px; height: 50px; display: flex; align-items: center; justify-content: center; margin-left: 1px; position: relative; }
.tapp svg { width: 30px; height: 32px; }
.tapp.under svg { height: 42px; }
.tapp.cur svg { height: 38px; }
.tapp.under::after, .tapp.cur::after { content: ""; position: absolute; left: 5px; right: 5px; bottom: 0; height: 3px; background: #76b9ed; }
.tapp.cur { background: #4b4b4b; }
.tapp.cur::after { left: 0; right: 0; }
.tile { font: bold 11px "Liberation Sans", sans-serif; fill: #fff; text-anchor: middle; }
.tray { margin-left: auto; display: flex; align-items: center; color: #fff; height: 50px; }
.help { width: 28px; height: 28px; margin-right: 14px; }
.qm { font: bold 20px "Liberation Sans", sans-serif; fill: #fff; text-anchor: middle; }
.chevup { width: 16px; height: 9px; margin-right: 16px; }
.wifi { width: 16px; height: 14px; margin-right: 10px; }
.game { width: 20px; height: 20px; margin-right: 40px; }
.batt { width: 20px; height: 12px; margin-right: 9px; }
.vol { width: 20px; height: 16px; margin-right: 10px; }
.ime { font-size: 19px; width: 22px; margin-right: 16px; }
.pin { width: 18px; height: 18px; background: #fff; color: #111; font-size: 14px; line-height: 18px; text-align: center; margin-right: 27px; }
.clock { display: flex; flex-direction: column; align-items: center; width: 74px; font-size: 15.500px; line-height: 22px; margin-right: 27px; white-space: nowrap; }
.notif { height: 36px; position: relative; margin-right: 14px; width: 39px; }
.notif svg { width: 20px; height: 18px; position: absolute; left: 0; top: 4px; }
.badge { position: absolute; left: 9px; top: 14px; width: 20px; height: 20px; border-radius: 50%; border: 1px solid #999; background: #3a3a3a; text-align: center; font-size: 12px; line-height: 18px; font-weight: 700; }
```
